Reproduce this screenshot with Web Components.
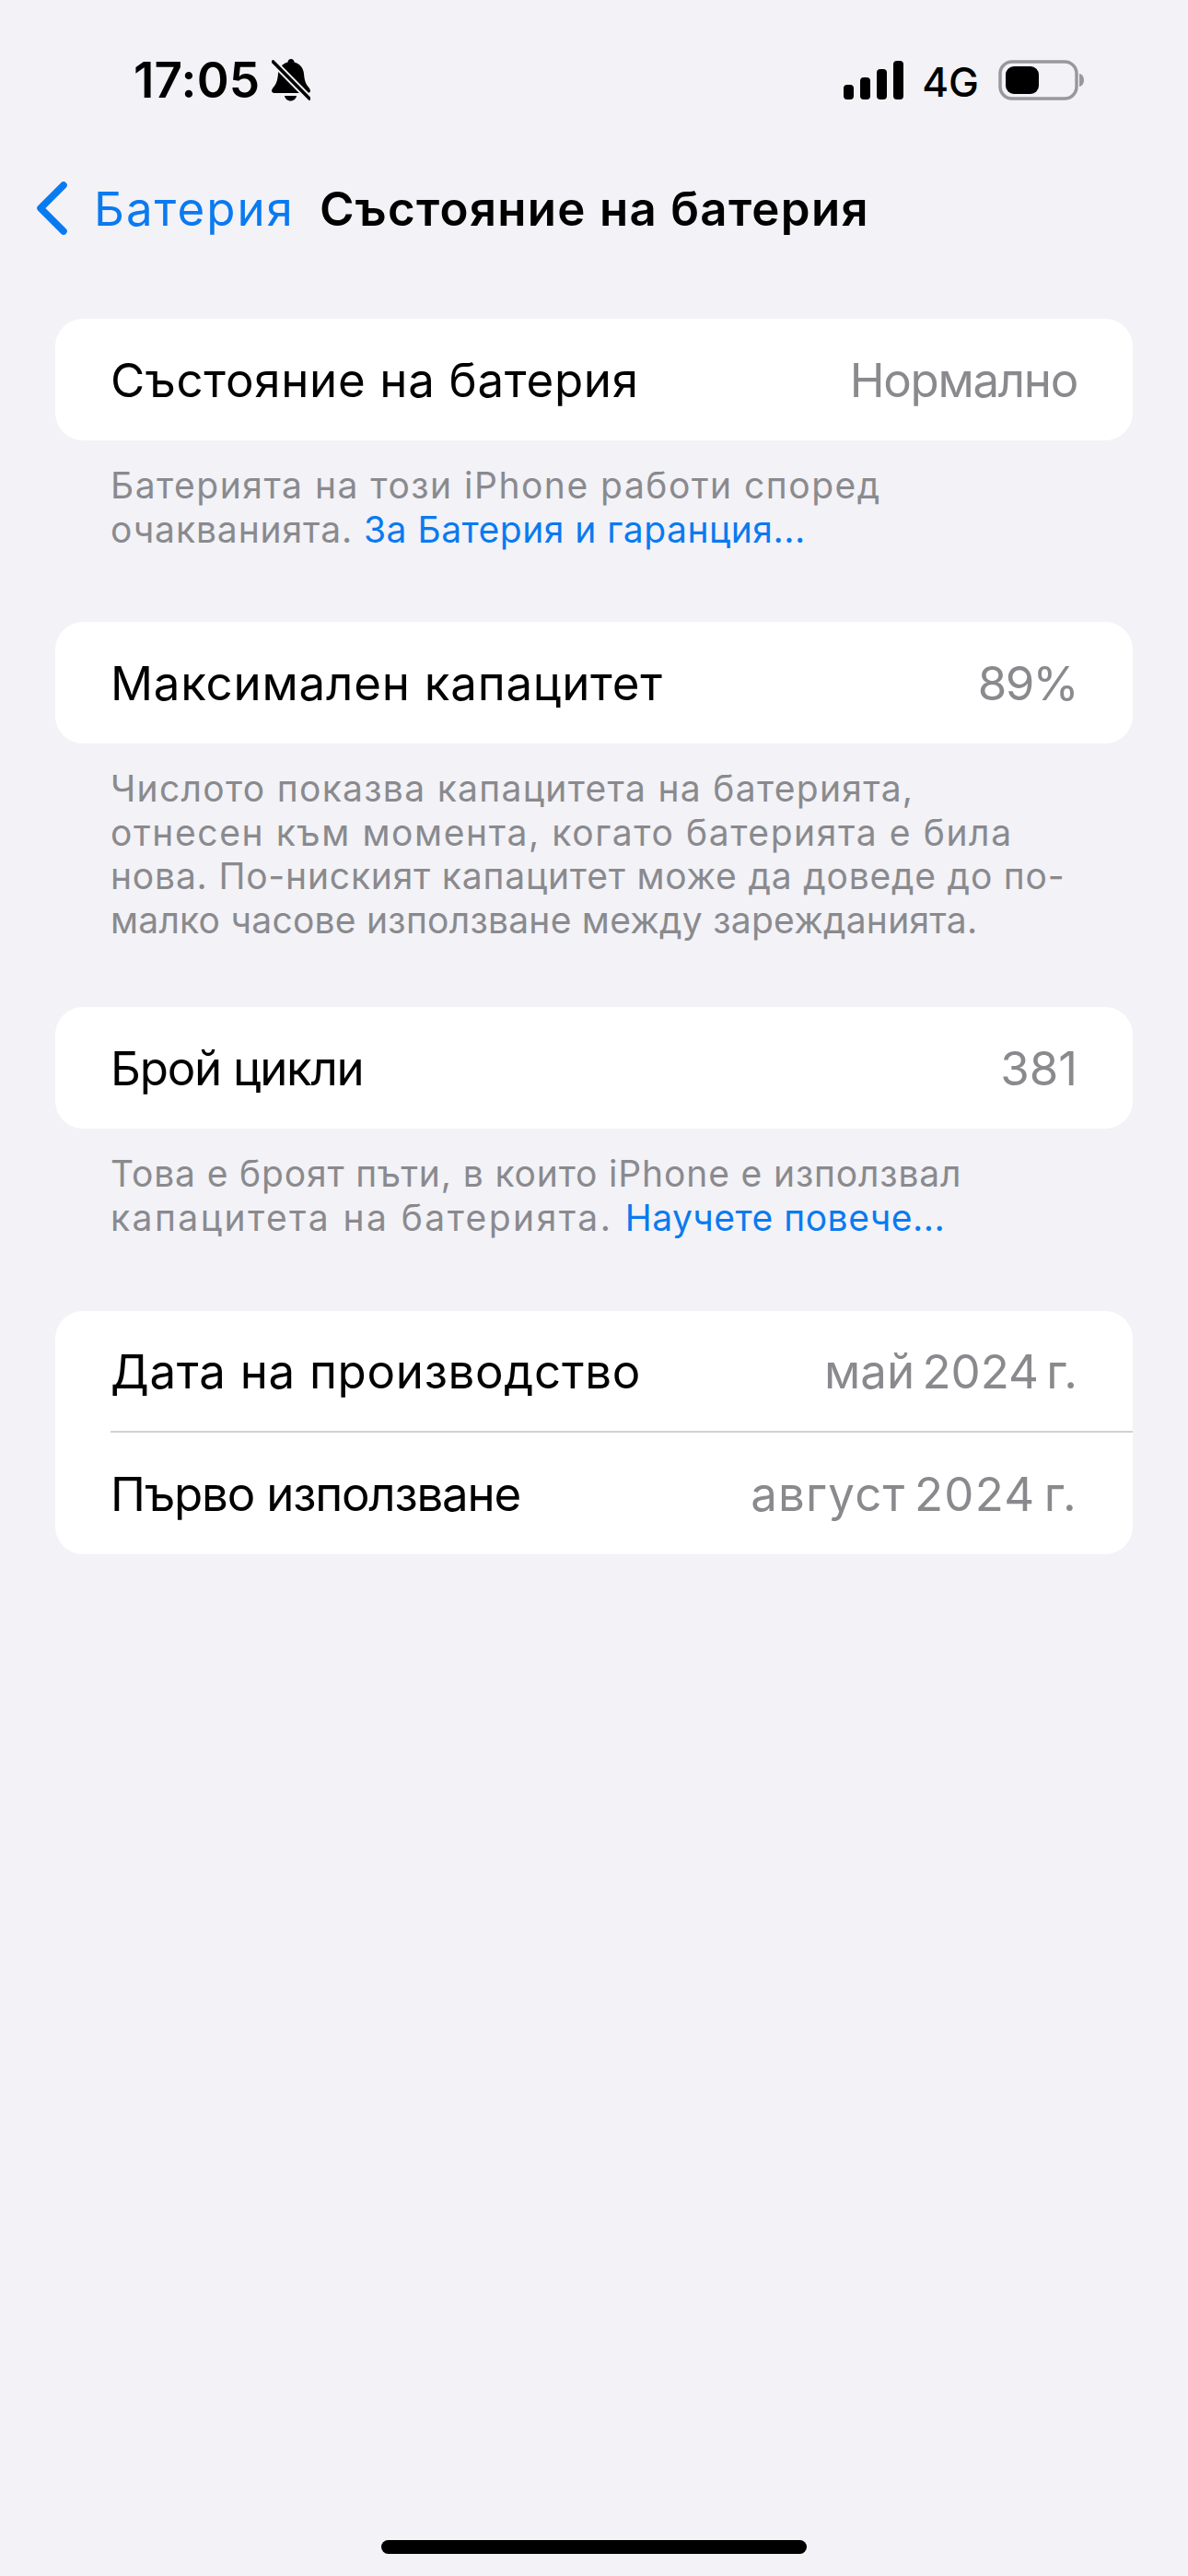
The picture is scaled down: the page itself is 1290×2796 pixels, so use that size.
<!DOCTYPE html>
<html lang="bg">
<head>
<meta charset="utf-8">
<title>Състояние на батерия</title>
<style>
  html, body { margin: 0; padding: 0; background: #f2f2f7; }
  body { width: 1290px; height: 2796px; overflow: hidden; font-family: Inter, Roboto, "Noto Sans", sans-serif; }
  battery-screen { height: 2796px; }
</style>
</head>
<body>
<template id="status-bar-tpl">
  <style>
    :host { display: flex; justify-content: space-between; align-items: center; height: 78px; padding: 48px 112px 0 145px; color: #000; }
    .left, .right { display: flex; align-items: center; }
    .time { font-size: 53px; font-weight: 600; letter-spacing: .2px; line-height: 60px; }
    .bell { margin-left: 13px; }
    .net { font-size: 44px; font-weight: 500; margin: 4px 21px 0 19px; line-height: 50px; }
  </style>
  <div class="left">
    <span class="time">17:05</span>
    <svg class="bell" width="42" height="46" viewBox="0 0 42 46">
      <path fill="#000" d="M17.500 3.500C17.500 1.500 19 0 21 0s3.500 1.500 3.500 3.500C30.500 5 34.500 10 35 16c.4 5 1.300 10.500 4.500 14 1.100 1.300 2.500 3.200 2.500 4.500 0 1.500-1.200 2.500-3 2.500H3c-1.800 0-3-1-3-2.500 0-1.300 1.400-3.200 2.500-4.500C5.700 26.500 6.600 21 7 16 7.500 10 11.500 5 17.500 3.500z"/>
      <path fill="#000" d="M14 40h13c-.5 3-3 5.500-6.500 5.500S14.500 43 14 40z"/>
      <path fill="none" stroke="#f2f2f7" stroke-width="7.500" d="M-1.500 0L44 46"/>
      <path fill="none" stroke="#000" stroke-width="3.600" stroke-linecap="round" d="M1.500 3L41 43"/>
    </svg>
  </div>
  <div class="right">
    <svg width="66" height="42" viewBox="0 0 66 42">
      <rect x="0" y="26" width="11" height="16" rx="4" fill="#000"/>
      <rect x="18" y="18" width="11" height="24" rx="4" fill="#000"/>
      <rect x="36" y="9" width="11" height="33" rx="4" fill="#000"/>
      <rect x="54" y="0" width="11" height="42" rx="4" fill="#000"/>
    </svg>
    <span class="net">4G</span>
    <svg width="94" height="44" viewBox="0 0 94 44">
      <rect x="2" y="2" width="83" height="40" rx="13" fill="none" stroke="#98989d" stroke-width="3.500"/>
      <rect x="8" y="7" width="36" height="30" rx="9" fill="#000"/>
      <path d="M88 15c3 .6 5 3.300 5 7s-2 6.400-5 7z" fill="#98989d"/>
    </svg>
  </div>
</template>

<template id="nav-bar-tpl">
  <style>
    :host { display: flex; align-items: center; height: 100px; padding: 0 0 0 38px; margin-top: 50px; }
    svg { flex: none; }
    .back { color: #0a7af0; font-size: 51px; margin-left: 28px; font-weight: 400; white-space: nowrap; letter-spacing: 2px; }
    .title { color: #000; font-size: 51px; font-weight: 600; margin-left: 27px; white-space: nowrap; letter-spacing: 1.3px; }
  </style>
  <svg width="36" height="58" viewBox="0 0 36 58">
    <path d="M31 4L6 29L31 54" fill="none" stroke="#0a7af0" stroke-width="7.500" stroke-linecap="round" stroke-linejoin="round"/>
  </svg>
  <span class="back"><slot name="back"></slot></span>
  <span class="title"><slot name="title"></slot></span>
</template>

<template id="note-link-tpl">
  <style>
    :host { display: inline; color: #0a7af0; letter-spacing: .5px; }
  </style>
  <slot></slot>
</template>

<template id="settings-group-tpl">
  <style>
    :host { display: block; margin: 0 60px; }
    .card { background: #fff; border-radius: 30px; overflow: hidden; }
    .note { color: #8a8a8e; font-size: 39px; line-height: 48px; padding: 25px 30px 76px 60px; letter-spacing: .6px; white-space: nowrap; }
    :host([compact]) .note { line-height: 47.500px; padding-bottom: 71px; }
  </style>
  <div class="card"><slot name="row"></slot></div>
  <div class="note"><slot name="note"></slot></div>
</template>

<template id="settings-row-tpl">
  <style>
    :host { display: block; padding-left: 60px; }
    .row { display: flex; justify-content: space-between; align-items: center; height: 132px; box-sizing: border-box; padding-right: 60px; font-size: 51px; }
    :host([divided]) .row { border-bottom: 2px solid #d1d1d6; }
    .label { color: #000; white-space: nowrap; }
    .value { color: #8a8a8e; white-space: nowrap; }
  </style>
  <div class="row">
    <span class="label"><slot name="label"></slot></span>
    <span class="value"><slot name="value"></slot></span>
  </div>
</template>

<template id="battery-screen-tpl">
  <style>
    :host { display: flex; flex-direction: column; position: relative; background: #f2f2f7; }
    .groups { display: flex; flex-direction: column; margin-top: 70px; }
    .home { position: absolute; left: 414px; bottom: 24px; width: 462px; height: 15px; border-radius: 8px; background: #000; }
  </style>
  <status-bar></status-bar>
  <slot name="nav"></slot>
  <div class="groups"><slot></slot></div>
  <div class="home"></div>
</template>

<battery-screen>
  <nav-bar slot="nav">
    <span slot="back">Батерия</span>
    <span slot="title">Състояние на батерия</span>
  </nav-bar>

  <settings-group>
    <settings-row slot="row"><span slot="label" style="letter-spacing:.7px">Състояние на батерия</span><span slot="value" style="letter-spacing:-1.3px">Нормално</span></settings-row>
    <span slot="note"><span style="letter-spacing:1.5px">Батерията на този iPhone работи според</span><br><span style="letter-spacing:.9px">очакванията. </span><note-link>За Батерия и гаранция...</note-link></span>
  </settings-group>

  <settings-group compact>
    <settings-row slot="row"><span slot="label" style="letter-spacing:.8px">Максимален капацитет</span><span slot="value" style="letter-spacing:-1.7px">89%</span></settings-row>
    <span slot="note"><span style="letter-spacing:1.3px">Числото показва капацитета на батерията,</span><br><span style="letter-spacing:1.6px">отнесен към момента, когато батерията е била</span><br><span style="letter-spacing:.8px">нова. По-ниският капацитет може да доведе до по-</span><br><span style="letter-spacing:.25px">малко часове използване между зарежданията.</span></span>
  </settings-group>

  <settings-group>
    <settings-row slot="row"><span slot="label" style="letter-spacing:-1.250px">Брой цикли</span><span slot="value">381</span></settings-row>
    <span slot="note"><span style="letter-spacing:.85px">Това е броят пъти, в които iPhone е използвал</span><br><span style="letter-spacing:2.45px">капацитета на батерията. </span><note-link>Научете повече...</note-link></span>
  </settings-group>

  <settings-group style="margin-top:1px">
    <settings-row slot="row" divided><span slot="label" style="letter-spacing:.7px">Дата на производство</span><span slot="value" style="word-spacing:-6px">май 2024 г.</span></settings-row>
    <settings-row slot="row"><span slot="label" style="letter-spacing:-1.2px">Първо използване</span><span slot="value" style="word-spacing:-6px;letter-spacing:1.2px">август 2024 г.</span></settings-row>
  </settings-group>
</battery-screen>

<script>
  function shadowFrom(host, id) {
    host.attachShadow({mode: 'open'}).appendChild(document.getElementById(id).content.cloneNode(true));
  }

  class StatusBar extends HTMLElement {
    constructor() { super(); shadowFrom(this, 'status-bar-tpl'); }
  }
  class NavBar extends HTMLElement {
    constructor() { super(); shadowFrom(this, 'nav-bar-tpl'); }
  }
  class NoteLink extends HTMLElement {
    constructor() { super(); shadowFrom(this, 'note-link-tpl'); }
  }
  class SettingsGroup extends HTMLElement {
    constructor() { super(); shadowFrom(this, 'settings-group-tpl'); }
  }
  class SettingsRow extends HTMLElement {
    constructor() { super(); shadowFrom(this, 'settings-row-tpl'); }
  }
  class BatteryScreen extends HTMLElement {
    constructor() { super(); shadowFrom(this, 'battery-screen-tpl'); }
  }

  customElements.define('status-bar', StatusBar);
  customElements.define('nav-bar', NavBar);
  customElements.define('note-link', NoteLink);
  customElements.define('settings-group', SettingsGroup);
  customElements.define('settings-row', SettingsRow);
  customElements.define('battery-screen', BatteryScreen);
</script>
</body>
</html>
